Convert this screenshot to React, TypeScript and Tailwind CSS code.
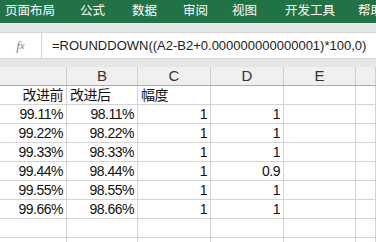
import React from "react";

const cols = ["w-[67px]", "w-[71px]", "w-[73px]", "w-[73px]", "w-[72px]", "flex-1"];
const headers = ["", "B", "C", "D", "E", ""];

const rows: { v: string; a: "l" | "r" }[][] = [
  [{ v: "改进前", a: "r" }, { v: "改进后", a: "l" }, { v: "幅度", a: "l" }, { v: "", a: "r" }, { v: "", a: "r" }, { v: "", a: "r" }],
  ...[
    ["99.11%", "98.11%", "1", "1"],
    ["99.22%", "98.22%", "1", "1"],
    ["99.33%", "98.33%", "1", "1"],
    ["99.44%", "98.44%", "1", "0.9"],
    ["99.55%", "98.55%", "1", "1"],
    ["99.66%", "98.66%", "1", "1"],
    ["", "", "", ""],
    ["", "", "", ""],
  ].map((r) => [...r, "", ""].map((v) => ({ v, a: "r" as const }))),
];

const menu: [string, string][] = [
  ["页面布局", "w-[75px]"],
  ["公式", "w-[52px]"],
  ["数据", "w-[51px]"],
  ["审阅", "w-[49px]"],
  ["视图", "w-[53px]"],
  ["开发工具", "w-[73px]"],
  ["帮助", "w-[40px]"],
];

export default function App() {
  return (
    <div className="w-[376px] h-[242px] overflow-hidden bg-white" style={{ fontFamily: '"Liberation Sans", "Noto Sans CJK SC", sans-serif' }}>
      <div className="h-[23px] bg-[#217346] flex items-center text-white text-[12.5px] whitespace-nowrap pl-[5px] overflow-hidden">
        {menu.map(([m, w]) => (
          <span key={m} className={`${w} shrink-0`}>{m}</span>
        ))}
      </div>
      <div className="h-[10px] bg-[#e6e6e6] border-b border-[#d5d5d5]" />
      <div className="h-[26px] flex items-center border-b border-[#d5d5d5] bg-white">
        <div className="w-[42px] h-full flex items-center justify-center border-r border-[#d5d5d5] text-[#808080] italic text-[13px]" style={{ fontFamily: '"Liberation Serif", serif' }}>
          f<span className="text-[11px]">x</span>
        </div>
        <div className="pl-[10px] text-[13px] text-[#222] whitespace-nowrap">=ROUNDDOWN((A2-B2+0.000000000000001)*100,0)</div>
      </div>
      <div className="h-[8px] bg-[#e6e6e6]" />
      <div className="h-[19px] flex bg-[#efefef] border-b border-[#ababab] text-[15px] text-[#333]">
        {headers.map((h, i) => (
          <div key={i} className={`${cols[i]} h-full flex items-center justify-center border-r border-[#cfcfcf]`}>
            {h}
          </div>
        ))}
      </div>
      {rows.map((r, ri) => (
        <div key={ri} className="h-[19px] flex border-b border-[#d4d4d4] text-[14px] text-[#111]">
          {r.map((c, ci) => (
            <div
              key={ci}
              className={`${cols[ci]} h-full flex items-end leading-[18px] border-r border-[#d4d4d4] whitespace-nowrap tracking-[-0.5px] ${c.a === "r" ? "justify-end pr-[3px]" : "justify-start pl-[3px]"}`}
            >
              {c.v}
            </div>
          ))}
        </div>
      ))}
    </div>
  );
}
